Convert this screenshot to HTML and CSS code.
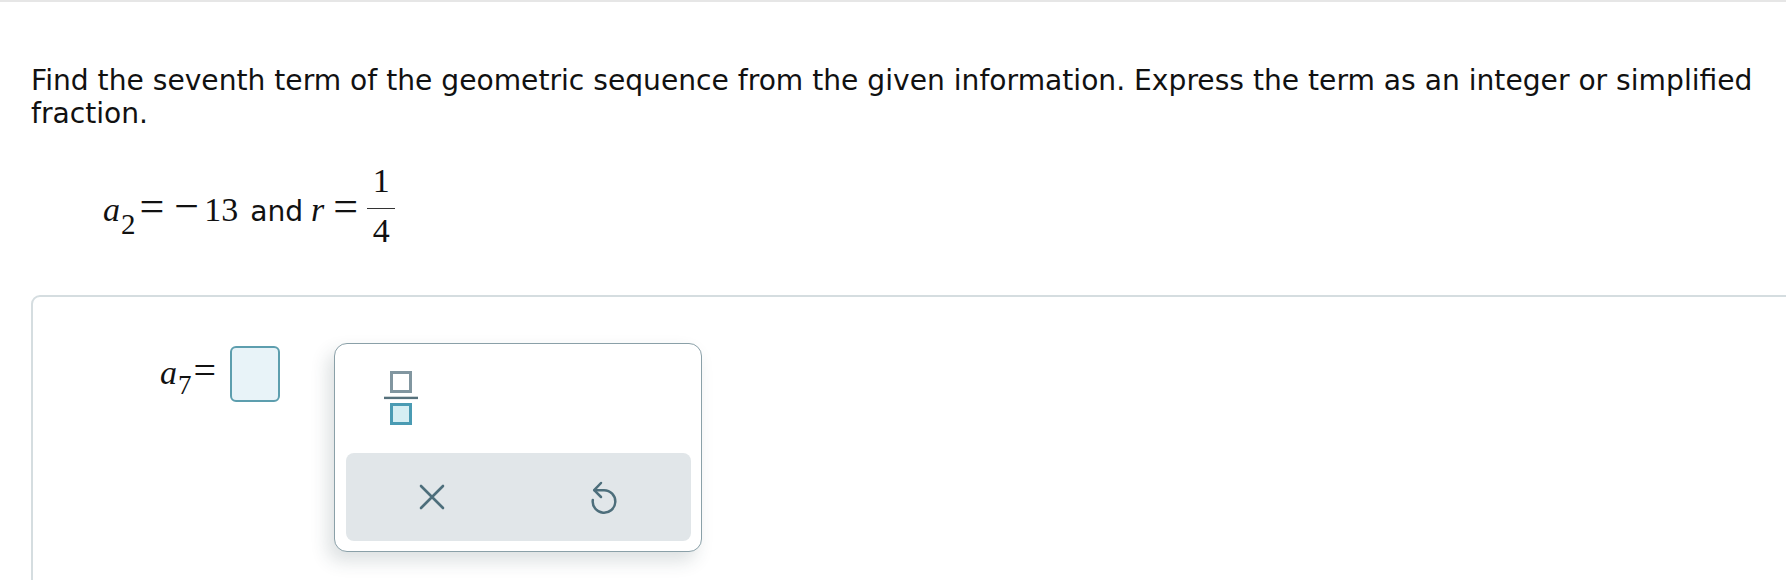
FILE: index.html
```html
<!DOCTYPE html>
<html>
<head>
<meta charset="utf-8">
<link rel="stylesheet" href="styles.css">
</head>
<body>
<div class="topline"></div>
<div class="page">
  <p class="question">Find the seventh term of the geometric sequence from the given information. Express the term as an integer or simplified fraction.</p>
  <div class="given"><span class="var">a</span><span class="sub">2</span><span class="op">=</span><span class="op minus">&#8722;</span><span class="num">13</span><span class="word">and</span><span class="var r">r</span><span class="op op2">=</span><span class="frac"><span class="fnum">1</span><span class="fbar"></span><span class="fden">4</span></span></div>
  <div class="panel">
    <div class="answer-row">
      <div class="lhs"><span class="var">a</span><span class="sub">7</span><span class="op">=</span></div>
      <div class="input"></div>
      <div class="popup">
        <div class="palette">
          <div class="pbtn">
            <svg width="34" height="54" viewBox="0 0 34 54">
              <rect x="7.5" y="1.5" width="19" height="19" fill="#fff" stroke="#8196a0" stroke-width="3"/>
              <rect x="0" y="25.7" width="34" height="2.4" fill="#56717c"/>
              <rect x="7.5" y="33.5" width="19" height="19" fill="#d5eef3" stroke="#4a9bb3" stroke-width="3"/>
            </svg>
          </div>
        </div>
        <div class="actions">
          <div class="abtn">
            <svg width="26" height="26" viewBox="0 0 26 26">
              <path d="M2 2 L24 24 M24 2 L2 24" stroke="#4d6e7b" stroke-width="2.6" stroke-linecap="round" fill="none"/>
            </svg>
          </div>
          <div class="abtn">
            <svg width="30" height="36" viewBox="-15 -22.5 30 36">
              <path d="M -11.2 -1.5 A 11.3 11.3 0 1 0 0 -11.3 L -9.5 -11.3" stroke="#4d6e7b" stroke-width="2.5" stroke-linecap="round" stroke-linejoin="round" fill="none"/>
              <path d="M -3 -18.5 L -9.8 -11.3 L -3 -4.5" stroke="#4d6e7b" stroke-width="2.5" stroke-linecap="round" stroke-linejoin="round" fill="none"/>
            </svg>
          </div>
        </div>
      </div>
    </div>
  </div>
</div>
</body>
</html>
```
FILE: styles.css
```css
html, body {
  margin: 0;
  padding: 0;
  background: #ffffff;
  overflow: hidden;
}
body {
  font-family: "DejaVu Sans", Verdana, sans-serif;
  color: #111;
}
.topline {
  height: 2px;
  background: #e6e6e6;
}
.page {
  padding-left: 31px;
}
.question {
  margin: 62px 0 0 0;
  font-size: 28.15px;
  line-height: 33px;
}
.given {
  margin-top: 34px;
  padding-left: 72px;
  font-family: "Liberation Serif", "Times New Roman", serif;
  font-size: 34px;
  line-height: 34px;
  white-space: nowrap;
}
.var {
  font-style: italic;
}
.sub {
  font-size: 29px;
  line-height: 0;
  vertical-align: -13px;
  margin-left: 1px;
}
.op {
  font-size: 44px;
  line-height: 0;
  margin: 0 5px 0 4px;
}
.minus {
  margin: 0 5px 0 5px;
}
.op2 {
  margin: 0 5px 0 9px;
}
.word {
  font-family: "DejaVu Sans", Verdana, sans-serif;
  font-size: 28.15px;
  margin: 0 8px 0 12px;
}
.frac {
  display: inline-block;
  vertical-align: -21px;
  text-align: center;
  margin-left: 4px;
  width: 28px;
}
.fnum, .fden {
  display: block;
  line-height: 34px;
}
.fbar {
  display: block;
  height: 1.5px;
  background: #333;
  margin-top: 9.5px;
}
.fden {
  margin-top: 5px;
}
.panel {
  margin-top: 47px;
  margin-right: -20px;
  height: 400px;
  border: 2px solid #d5dde0;
  border-radius: 9px;
  padding: 46px 0 0 124px;
  box-sizing: border-box;
}
.answer-row {
  display: flex;
  align-items: flex-start;
}
.lhs {
  font-family: "Liberation Serif", "Times New Roman", serif;
  font-size: 34px;
  line-height: 40px;
  margin-top: 9.5px;
  width: 73px;
  padding-right: 14px;
  box-sizing: border-box;
  text-align: right;
  white-space: nowrap;
}
.lhs .sub {
  font-size: 27px;
  vertical-align: -10px;
  margin-left: 1px;
}
.lhs .op {
  font-size: 40px;
  margin: 0 0 0 2px;
}
.input {
  width: 50px;
  height: 56px;
  margin-top: 3px;
  box-sizing: border-box;
  border: 2px solid #5d9eae;
  border-radius: 6px;
  background: #e8f3f8;
}
.popup {
  margin-left: 54px;
  width: 368px;
  height: 209px;
  box-sizing: border-box;
  border: 1.5px solid #8aa0a8;
  border-radius: 13px;
  background: #fff;
  padding: 10px 10.5px 9.5px 10.5px;
  box-shadow: -6px 9px 18px rgba(40, 60, 70, 0.16);
  display: flex;
  flex-direction: column;
}
.palette {
  height: 98.5px;
  padding: 16.5px 0 0 38px;
  box-sizing: border-box;
}
.pbtn {
  width: 34px;
  height: 54px;
}
.pbtn svg {
  display: block;
}
.actions {
  height: 88px;
  background: #e1e6e9;
  border-radius: 8px;
  display: flex;
}
.abtn {
  flex: 1;
  display: flex;
  align-items: center;
  justify-content: center;
}
.abtn svg {
  display: block;
}
```
